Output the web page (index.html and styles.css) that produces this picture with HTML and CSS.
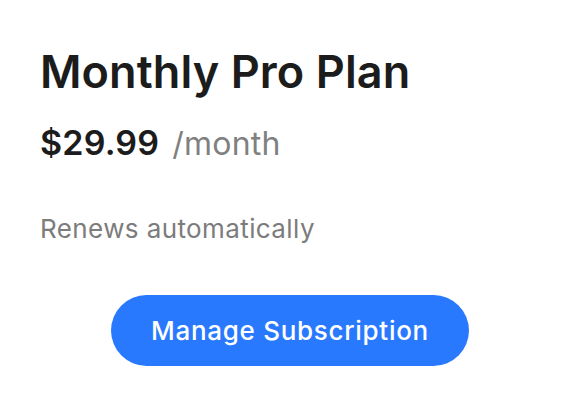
FILE: index.html
```html
<!DOCTYPE html>
<html lang="en">
<head>
    <meta charset="UTF-8">
    <meta name="viewport" content="width=device-width, initial-scale=1.0">
    <title>Subscription</title>
    <link rel="stylesheet" href="styles.css">
</head>
<body>
    <div class="card">
        <h1 class="plan-title">Monthly Pro Plan</h1>
        <div class="price-row">
            <span class="price">$29.99</span>
            <span class="period">/month</span>
        </div>
        <p class="renew">Renews automatically</p>
        <div class="actions">
            <button class="manage-btn">Manage Subscription</button>
        </div>
    </div>
</body>
</html>
```

FILE: styles.css
```css
body {
    margin: 0;
    background: #fff;
    font-family: Inter, "Noto Sans", sans-serif;
    color: #1c1c1c;
}
.card {
    width: 580px;
    padding: 42px 40px 0;
    box-sizing: border-box;
}
.plan-title {
    margin: 0;
    font-size: 45px;
    font-weight: 600;
    line-height: 60px;
    letter-spacing: 0.1px;
}
.price-row {
    display: flex;
    align-items: baseline;
    gap: 13px;
    margin-top: 20px;
}
.price {
    font-size: 34px;
    font-weight: 600;
    letter-spacing: 0.2px;
}
.period {
    font-size: 32px;
    color: #808080;
    letter-spacing: 0.2px;
}
.renew {
    margin: 50px 0 0;
    font-size: 26px;
    color: #7c7c7c;
    letter-spacing: 0.4px;
}
.actions {
    display: flex;
    justify-content: center;
    margin-top: 51px;
}
.manage-btn {
    width: 358px;
    height: 71px;
    border: none;
    border-radius: 36px;
    background-color: #2979ff;
    color: #fff;
    font-family: inherit;
    font-size: 26px;
    font-weight: 500;
    letter-spacing: 0.7px;
    cursor: pointer;
}
```
